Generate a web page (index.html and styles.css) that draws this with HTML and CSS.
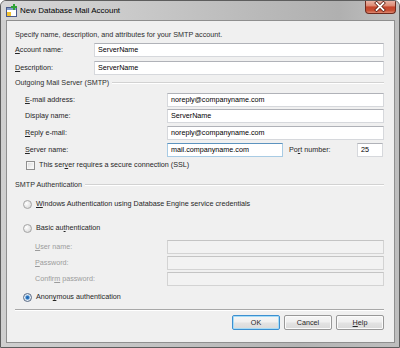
FILE: index.html
```html
<!DOCTYPE html>
<html>
<head>
<meta charset="utf-8">
<link rel="stylesheet" href="styles.css">
</head>
<body>
<div class="window">
  <div class="titlebar">
    <svg class="app-icon" width="13" height="13" viewBox="0 0 13 13">
      <rect x="1.5" y="3.5" width="10" height="9" fill="#ffffff" stroke="#4a5a8a"/>
      <rect x="2" y="4" width="9" height="2" fill="#7f9cc8"/>
      <rect x="2" y="8" width="4" height="4" fill="#f2c230"/>
      <rect x="8" y="0" width="2" height="6" fill="#2fa336"/>
      <rect x="6" y="2" width="6" height="2" fill="#2fa336"/>
    </svg>
    <span class="title">New Database Mail Account</span>
    <div class="close">
      <svg width="31" height="13" viewBox="0 0 31 13">
        <path d="M12 3 L19 10 M19 3 L12 10" stroke="#5b1c12" stroke-width="3.6" stroke-linecap="square"/>
        <path d="M12 3 L19 10 M19 3 L12 10" stroke="#ffffff" stroke-width="2" stroke-linecap="square"/>
      </svg>
    </div>
  </div>
  <div class="client">
    <div class="intro">Specify name, description, and attributes for your SMTP account.</div>

    <div class="row r-acct"><span class="lbl lbl-top"><u>A</u>ccount name:</span><div class="input grow">ServerName</div></div>
    <div class="row r-desc"><span class="lbl lbl-top"><u>D</u>escription:</span><div class="input grow">ServerName</div></div>

    <div class="group-head gh1"><span>Outgoing Mail Server (SMTP)</span><div class="rule"></div></div>
    <div class="group-body">
      <div class="row r-email"><span class="lbl lbl-grp"><u>E</u>-mail address:</span><div class="input grow">noreply@companyname.com</div></div>
      <div class="row r-disp"><span class="lbl lbl-grp">Display name:</span><div class="input grow">ServerName</div></div>
      <div class="row r-reply"><span class="lbl lbl-grp"><u>R</u>eply e-mail:</span><div class="input grow">noreply@companyname.com</div></div>
      <div class="row r-server"><span class="lbl lbl-grp"><u>S</u>erver name:</span><div class="input focus server">mail.companyname.com</div><span class="lbl port-lbl">Po<u>r</u>t number:</span><div class="input port">25</div></div>
      <div class="check-row r-ssl"><span class="checkbox"></span><span>This ser<u>v</u>er requires a secure connection (SSL)</span></div>
    </div>

    <div class="group-head gh2"><span>SMTP Authentication</span><div class="rule"></div></div>
    <div class="auth-body">
      <div class="radio-row r-win"><span class="radio"></span><span><u>W</u>indows Authentication using Database Engine service credentials</span></div>
      <div class="radio-row r-basic"><span class="radio"></span><span>Basic au<u>t</u>hentication</span></div>
      <div class="row r-user sub"><span class="lbl lbl-sub disabled"><u>U</u>ser name:</span><div class="input disabled-input grow"></div></div>
      <div class="row r-pass sub"><span class="lbl lbl-sub disabled"><u>P</u>assword:</span><div class="input disabled-input grow"></div></div>
      <div class="row r-conf sub"><span class="lbl lbl-sub disabled">Confir<u>m</u> password:</span><div class="input disabled-input grow"></div></div>
      <div class="radio-row r-anon"><span class="radio checked"></span><span>Anon<u>y</u>mous authentication</span></div>
    </div>

    <div class="separator"></div>
    <div class="buttons">
      <div class="btn default">OK</div>
      <div class="btn">Cancel</div>
      <div class="btn"><u>H</u>elp</div>
    </div>
  </div>
</div>
</body>
</html>
```

FILE: styles.css
```css
html, body {
  margin: 0;
  padding: 0;
  background: #ffffff;
}

body {
  font-family: "Liberation Sans", Arial, sans-serif;
  font-size: 7.2px;
  color: #262626;
}

u {
  text-decoration: underline;
  text-underline-offset: 1px;
}

.window {
  width: 400px;
  height: 348px;
  box-sizing: border-box;
  border: 1px solid #5d5d5d;
  border-radius: 6px 6px 0 0;
  background: linear-gradient(90deg, #cfcfcf 0%, #c2c2c2 40%, #b4b4b4 75%, #bebebe 100%);
  display: flex;
  flex-direction: column;
  overflow: hidden;
}

.titlebar {
  height: 19px;
  display: flex;
  align-items: center;
  padding-left: 4px;
  background: linear-gradient(90deg, #d6d6d6 0%, #cbcbcb 30%, #b9b9b9 65%, #b0b0b0 85%, #c2c2c2 100%);
}

.app-icon {
  flex: none;
  width: 13px;
  height: 13px;
}

.title {
  margin-left: 2px;
  font-size: 8px;
  color: #000000;
  line-height: 12px;
}

.close {
  align-self: flex-start;
  margin-left: auto;
  margin-right: 3px;
  width: 31px;
  height: 13px;
  box-sizing: border-box;
  border: 1px solid #6e2a1e;
  border-top: none;
  border-radius: 0 0 4px 4px;
  background: linear-gradient(#eab4a6 0%, #dd8a74 40%, #c4452c 50%, #c64e33 78%, #df8a72 100%);
  display: flex;
  align-items: center;
  justify-content: center;
  overflow: hidden;
}

.close svg {
  margin-top: -1px;
  margin-left: -1px;
}

.client {
  flex: 1;
  margin: 0 4px 4px 5px;
  border: 1px solid #8f8f8f;
  background: #f0f0f0;
  padding: 8px 10px 0 8px;
  display: flex;
  flex-direction: column;
}

.intro {
  height: 12px;
  line-height: 12px;
  color: #2e2e2e;
}

.row {
  display: flex;
  align-items: center;
  height: 14px;
}

.lbl {
  flex: none;
  line-height: 12px;
}

.lbl-top { width: 79px; }
.lbl-grp { width: 142px; }
.lbl-sub { width: 132px; }

.disabled {
  color: #9c9c9c;
}

.input {
  box-sizing: border-box;
  height: 14px;
  line-height: 12px;
  padding: 0 3px;
  background: #ffffff;
  border: 1px solid #d6d8dc;
  border-top-color: #b0b2b8;
  color: #000000;
  white-space: nowrap;
  overflow: hidden;
}

.grow { flex: 1; }

.input.focus {
  border-color: #a8cbe4;
  border-top-color: #5c93bf;
}

.server { width: 116px; flex: none; }
.port-lbl { margin-left: 6px; width: 68px; }
.port { width: 26px; flex: none; }

.disabled-input {
  background: #f2f2f2;
  border-color: #d3d3d3;
  border-top-color: #c4c4c4;
}

.r-acct { margin-top: 2px; }
.r-desc { margin-top: 4px; }

.group-head {
  display: flex;
  align-items: center;
  height: 12px;
  line-height: 12px;
  color: #2e2e2e;
  gap: 3px;
}

.group-head .rule {
  flex: 1;
  height: 0;
  border-top: 1px solid #d2d2d2;
  border-bottom: 1px solid #ffffff;
}

.gh1 { margin-top: 2px; }
.gh2 { margin-top: 8px; }

.group-body {
  padding-left: 10px;
  display: flex;
  flex-direction: column;
}

.r-email { margin-top: 4px; }
.r-disp { margin-top: 2px; }
.r-reply { margin-top: 3px; }
.r-server { margin-top: 3px; }

.check-row {
  display: flex;
  align-items: center;
  height: 12px;
  margin-top: 2px;
  margin-left: 1px;
  line-height: 12px;
}

.checkbox {
  flex: none;
  width: 9px;
  height: 9px;
  box-sizing: border-box;
  border: 1px solid #8f8f8f;
  background: linear-gradient(135deg, #d8d8d8 0%, #f4f4f4 70%, #ffffff 100%);
  margin-right: 4px;
  box-shadow: inset 0 0 0 1px #f6f6f6;
}

.auth-body {
  padding-left: 8px;
  display: flex;
  flex-direction: column;
}

.radio-row {
  display: flex;
  align-items: center;
  height: 12px;
  line-height: 12px;
}

.radio {
  flex: none;
  width: 9px;
  height: 9px;
  box-sizing: border-box;
  border-radius: 50%;
  border: 1px solid #a4a4a4;
  background: radial-gradient(circle at 35% 35%, #ffffff 0%, #e6e6e6 55%, #d2d2d2 100%);
  margin-right: 4px;
}

.radio.checked {
  border-color: #5a6b86;
  background: radial-gradient(circle at 50% 50%, #1f5c9e 0%, #2f7bc8 30%, #9fc4e6 45%, #e6eef6 60%, #cfd6de 100%);
}

.r-win { margin-top: 7px; }
.r-basic { margin-top: 12px; }

.sub { padding-left: 12px; }
.r-user { margin-top: 6px; }
.r-pass { margin-top: 2px; }
.r-conf { margin-top: 2px; }
.r-anon { margin-top: 5px; }

.separator {
  margin-top: 6px;
  height: 0;
  border-top: 1px solid #a8a8a8;
  border-bottom: 1px solid #ffffff;
}

.buttons {
  margin-top: 4px;
  display: flex;
  justify-content: flex-end;
  gap: 4px;
}

.btn {
  width: 48px;
  height: 15px;
  box-sizing: border-box;
  border: 1px solid #989898;
  border-radius: 2px;
  background: linear-gradient(#f6f6f6 0%, #efefef 48%, #e3e3e3 52%, #dadada 100%);
  box-shadow: inset 0 0 0 1px #fbfbfb;
  text-align: center;
  line-height: 13px;
  color: #262626;
}

.btn.default {
  border-color: #3c8fd0;
  box-shadow: inset 0 0 0 1px #a6dcf7;
}
```
